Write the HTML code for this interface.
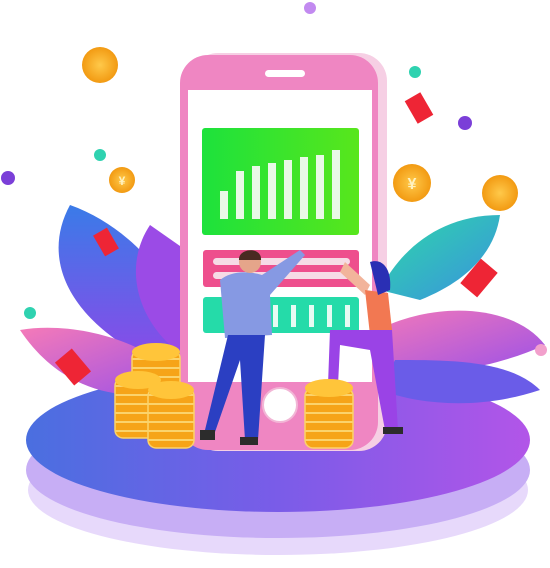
<!DOCTYPE html>
<html><head><style>html,body{margin:0;padding:0;background:#fff}svg{display:block}</style></head>
<body>
<svg width="550" height="568" viewBox="0 0 550 568" xmlns="http://www.w3.org/2000/svg">
<defs>
<linearGradient id="plat" x1="0" y1="0" x2="1" y2="0"><stop offset="0" stop-color="#4a6fe0"/><stop offset="0.5" stop-color="#7a5ce8"/><stop offset="1" stop-color="#b255e8"/></linearGradient>
<linearGradient id="leafL" x1="0" y1="0" x2="0" y2="1"><stop offset="0" stop-color="#3a7be8"/><stop offset="1" stop-color="#8a4ae8"/></linearGradient>
<linearGradient id="leafP" x1="0" y1="0" x2="1" y2="1"><stop offset="0" stop-color="#f57ab8"/><stop offset="1" stop-color="#9a50e8"/></linearGradient>
<linearGradient id="leafG" x1="0" y1="0" x2="1" y2="1"><stop offset="0" stop-color="#2ed9a8"/><stop offset="1" stop-color="#3a90e0"/></linearGradient>
<linearGradient id="grn" x1="0" y1="0" x2="1" y2="0"><stop offset="0" stop-color="#1de23c"/><stop offset="1" stop-color="#58e61c"/></linearGradient>
<radialGradient id="coin"><stop offset="0" stop-color="#ffc94a"/><stop offset="1" stop-color="#f29a12"/></radialGradient>
<pattern id="stripe" width="10" height="9" patternUnits="userSpaceOnUse"><rect width="10" height="9" fill="#f6a418"/><rect y="7" width="10" height="2" fill="#fbd36b"/></pattern>
</defs>
<ellipse cx="278" cy="490" rx="250" ry="65" fill="#e7d9fb"/>
<ellipse cx="278" cy="470" rx="252" ry="68" fill="#c7aef5"/>
<ellipse cx="278" cy="440" rx="252" ry="72" fill="url(#plat)"/>
<path d="M70 205 C40 260 70 320 150 360 L200 360 C190 300 140 230 70 205Z" fill="url(#leafL)"/>
<path d="M150 225 C120 270 140 330 190 360 L200 260Z" fill="#9b4be6"/>
<path d="M20 330 C80 320 160 345 190 390 C120 405 60 390 20 330Z" fill="url(#leafP)"/>
<path d="M500 215 C440 215 400 250 380 290 L420 300 C470 280 495 250 500 215Z" fill="url(#leafG)"/>
<path d="M360 340 C420 300 510 300 545 345 C490 370 420 380 360 370Z" fill="url(#leafP)"/>
<path d="M395 360 C450 360 510 360 540 390 C480 410 420 405 380 390Z" fill="#6a5ce8"/>
<rect x="190" y="53" width="197" height="398" rx="28" fill="#f6cfe4"/>
<rect x="180" y="55" width="198" height="395" rx="28" fill="#ef86c2"/>
<rect x="265" y="70" width="40" height="7" rx="3.5" fill="#fff"/>
<rect x="188" y="90" width="184" height="292" fill="#fff"/>
<rect x="202" y="128" width="157" height="107" rx="3" fill="url(#grn)"/>
<g fill="#e9f9e6">
<rect x="220" y="191" width="8" height="28"/><rect x="236" y="171" width="8" height="48"/><rect x="252" y="166" width="8" height="53"/><rect x="268" y="163" width="8" height="56"/><rect x="284" y="160" width="8" height="59"/><rect x="300" y="157" width="8" height="62"/><rect x="316" y="155" width="8" height="64"/><rect x="332" y="150" width="8" height="69"/>
</g>
<rect x="203" y="250" width="156" height="37" rx="3" fill="#ee4f8d"/>
<rect x="213" y="258" width="137" height="7" rx="3.5" fill="#f6dbe6"/>
<rect x="213" y="272" width="137" height="7" rx="3.5" fill="#f6dbe6"/>
<rect x="203" y="297" width="156" height="36" rx="3" fill="#25dba9"/>
<g fill="#e6fbf3"><rect x="273" y="305" width="5" height="22"/><rect x="291" y="305" width="5" height="22"/><rect x="309" y="305" width="5" height="22"/><rect x="327" y="305" width="5" height="22"/><rect x="345" y="305" width="5" height="22"/></g>
<circle cx="280" cy="405" r="17" fill="#fff" stroke="#f2b6d6" stroke-width="2"/>
<path d="M220 280 C230 272 245 270 262 275 L300 250 L305 255 L270 295 L272 335 L225 338 Z" fill="#8699e3"/>
<path d="M228 335 L205 430 L215 432 L240 360 L245 440 L258 440 L265 335Z" fill="#2b3fc2"/>
<circle cx="250" cy="262" r="11" fill="#e5a58a"/>
<path d="M239 260 C238 248 262 246 261 260Z" fill="#4a2a22"/>
<path d="M200 430 h15 v10 h-15z M240 437 h18 v8 h-18z" fill="#2c2c2c"/>
<path d="M340 272 L365 295 L370 285 L345 262Z" fill="#f2b49b"/>
<path d="M365 290 L388 293 L392 330 L370 335 Z" fill="#f27852"/>
<path d="M370 262 C382 258 392 268 390 290 L378 295 Z" fill="#2a2fb4"/>
<path d="M330 330 L392 330 L398 430 L385 430 L370 350 L340 345 L338 385 L328 385Z" fill="#9a43e6"/>
<path d="M320 383 h18 v7 h-18z M383 427 h20 v7 h-20z" fill="#2c2c2c"/>
<g fill="url(#stripe)" stroke="#fbd36b" stroke-width="1.5">
<rect x="132" y="350" width="48" height="50" rx="8"/>
<rect x="115" y="378" width="45" height="60" rx="8"/>
<rect x="148" y="388" width="46" height="60" rx="8"/>
<rect x="305" y="388" width="48" height="60" rx="8"/>
</g>
<ellipse cx="156" cy="352" rx="24" ry="9" fill="#ffc53a"/>
<ellipse cx="138" cy="380" rx="23" ry="9" fill="#ffc53a"/>
<ellipse cx="171" cy="390" rx="23" ry="9" fill="#ffc53a"/>
<ellipse cx="329" cy="388" rx="24" ry="9" fill="#ffc53a"/>
<circle cx="100" cy="65" r="18" fill="url(#coin)"/>
<circle cx="122" cy="180" r="13" fill="url(#coin)"/>
<circle cx="412" cy="183" r="19" fill="url(#coin)"/>
<circle cx="500" cy="193" r="18" fill="url(#coin)"/>
<g font-family="Liberation Sans, sans-serif" fill="#fff2c0" font-weight="bold" text-anchor="middle"><text x="122" y="185" font-size="12">¥</text><text x="412" y="189" font-size="16">¥</text></g>
<g fill="#ee2535"><rect x="410" y="95" width="18" height="26" transform="rotate(-30 419 108)"/><rect x="98" y="230" width="16" height="24" transform="rotate(-30 106 242)"/><rect x="468" y="262" width="22" height="32" transform="rotate(40 479 278)"/><rect x="62" y="352" width="22" height="30" transform="rotate(-40 73 367)"/></g>
<circle cx="310" cy="8" r="6" fill="#c28af0"/><circle cx="415" cy="72" r="6" fill="#2fd2b0"/><circle cx="465" cy="123" r="7" fill="#7b3fd8"/><circle cx="100" cy="155" r="6" fill="#2fd2b0"/><circle cx="8" cy="178" r="7" fill="#7b3fd8"/><circle cx="30" cy="313" r="6" fill="#2fd2b0"/><circle cx="541" cy="350" r="6" fill="#f2a0cc"/>
</svg>
</body></html>
